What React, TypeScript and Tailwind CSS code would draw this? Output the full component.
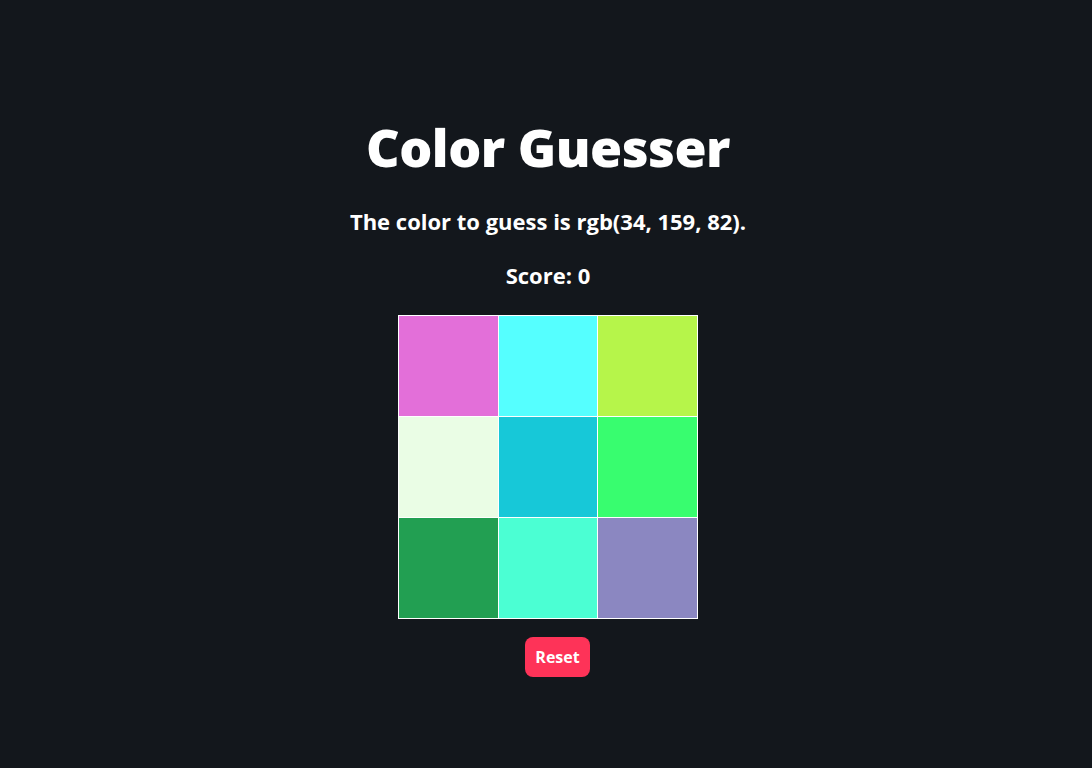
const colors = [
  '#e36fd9',
  '#55ffff',
  '#b6f54a',
  '#eafde5',
  '#17c8d8',
  '#38fd6f',
  '#229f52',
  '#4bffd3',
  '#8b87c1',
];

export default function App() {
  return (
    <div className="min-h-screen w-full bg-[#13171c] text-white font-['Open_Sans',sans-serif] flex flex-col items-center pt-[118px] pl-[4px]">
      <h1 className="text-[52px] leading-[58px] font-extrabold tracking-[-0.5px]">Color Guesser</h1>
      <p className="mt-[31px] text-[22px] leading-[28px] font-bold">The color to guess is rgb(34, 159, 82).</p>
      <p className="mt-[26px] text-[22px] leading-[28px] font-bold">Score: 0</p>
      <div className="mt-[26px] w-[300px] bg-white p-px grid grid-cols-3 gap-px">
        {colors.map((c) => (
          <button key={c} className="h-[100px]" style={{ backgroundColor: c }} />
        ))}
      </div>
      <button className="mt-[18px] ml-[19px] h-10 px-[10px] rounded-lg bg-[#fe3358] text-white text-[16px] font-bold">
        Reset
      </button>
    </div>
  );
}
